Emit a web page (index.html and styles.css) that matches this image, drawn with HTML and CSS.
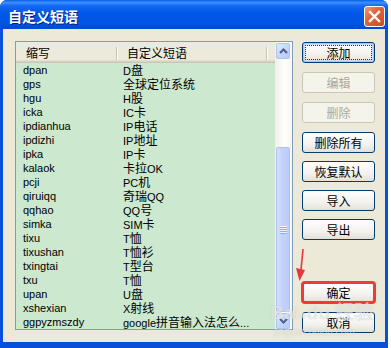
FILE: index.html
```html
<!DOCTYPE html>
<html lang="zh-CN">
<head>
    <meta charset="UTF-8">
    <meta name="viewport" content="width=device-width, initial-scale=1.0">
    <title>自定义短语</title>
    <link rel="stylesheet" href="styles.css">
</head>
<body>
    <div class="window">
        <div class="titlebar">
            <span class="title">自定义短语</span>
            <span class="close-btn">
                <svg width="13" height="13" viewBox="0 0 13 13">
                    <path d="M2 2 L11 11 M11 2 L2 11" stroke="#fff" stroke-width="2.4" stroke-linecap="square"/>
                </svg>
            </span>
        </div>
        <div class="client">
            <div class="list">
                <div class="list-body">
                    <div class="list-header">
                        <div class="col-1">缩写</div>
                        <span class="sep"></span>
                        <div class="col-2">自定义短语</div>
                        <span class="sep"></span>
                    </div>
                    <div class="row"><div class="col-1">dpan</div><div class="col-2">D<span class="cn">盘</span></div></div>
                    <div class="row"><div class="col-1">gps</div><div class="col-2"><span class="cn">全球定位系统</span></div></div>
                    <div class="row"><div class="col-1">hgu</div><div class="col-2">H<span class="cn">股</span></div></div>
                    <div class="row"><div class="col-1">icka</div><div class="col-2">IC<span class="cn">卡</span></div></div>
                    <div class="row"><div class="col-1">ipdianhua</div><div class="col-2">IP<span class="cn">电话</span></div></div>
                    <div class="row"><div class="col-1">ipdizhi</div><div class="col-2">IP<span class="cn">地址</span></div></div>
                    <div class="row"><div class="col-1">ipka</div><div class="col-2">IP<span class="cn">卡</span></div></div>
                    <div class="row"><div class="col-1">kalaok</div><div class="col-2"><span class="cn">卡拉</span>OK</div></div>
                    <div class="row"><div class="col-1">pcji</div><div class="col-2">PC<span class="cn">机</span></div></div>
                    <div class="row"><div class="col-1">qiruiqq</div><div class="col-2"><span class="cn">奇瑞</span>QQ</div></div>
                    <div class="row"><div class="col-1">qqhao</div><div class="col-2">QQ<span class="cn">号</span></div></div>
                    <div class="row"><div class="col-1">simka</div><div class="col-2">SIM<span class="cn">卡</span></div></div>
                    <div class="row"><div class="col-1">tixu</div><div class="col-2">T<span class="cn">恤</span></div></div>
                    <div class="row"><div class="col-1">tixushan</div><div class="col-2">T<span class="cn">恤衫</span></div></div>
                    <div class="row"><div class="col-1">txingtai</div><div class="col-2">T<span class="cn">型台</span></div></div>
                    <div class="row"><div class="col-1">txu</div><div class="col-2">T<span class="cn">恤</span></div></div>
                    <div class="row"><div class="col-1">upan</div><div class="col-2">U<span class="cn">盘</span></div></div>
                    <div class="row"><div class="col-1">xshexian</div><div class="col-2">X<span class="cn">射线</span></div></div>
                    <div class="row"><div class="col-1">ggpyzmszdy</div><div class="col-2">google<span class="cn">拼音输入法怎么</span>...</div></div>
                </div>
                <div class="scrollbar">
                    <div class="sb-btn">
                        <svg width="9" height="6" viewBox="0 0 9 6"><polyline points="1,5 4.5,1.5 8,5" fill="none" stroke="#4D6185" stroke-width="2"/></svg>
                    </div>
                    <div class="sb-thumb"><span class="grip"></span></div>
                    <div class="sb-btn">
                        <svg width="9" height="6" viewBox="0 0 9 6"><polyline points="1,1 4.5,4.5 8,1" fill="none" stroke="#4D6185" stroke-width="2"/></svg>
                    </div>
                </div>
            </div>
            <div class="buttons">
                <button class="btn default">添加</button>
                <button class="btn" disabled>编辑</button>
                <button class="btn" disabled>删除</button>
                <button class="btn">删除所有</button>
                <button class="btn">恢复默认</button>
                <button class="btn">导入</button>
                <button class="btn">导出</button>
                <button class="btn ok marked">确定</button>
                <button class="btn cancel">取消</button>
            </div>
        </div>

        <!-- 标注箭头 -->
        <svg class="arrow" width="16" height="36" viewBox="0 0 16 36">
            <path d="M10 1 L8 22" stroke="#E8363A" stroke-width="1.6" fill="none"/>
            <polygon points="3,20 12,22 6.5,33" fill="#E8363A"/>
        </svg>

        <div class="watermark">
            <span class="wm-big">Bai<span class="paw">●</span>du 经验</span>
            <span class="wm-small">jingyan.baidu.com</span>
        </div>
    </div>
</body>
</html>
```

FILE: styles.css
```css
body {
    margin: 0;
    padding: 0;
    background-color: #fff;
    overflow: hidden;
}
.window {
    position: relative;
    width: 388px;
    height: 348px;
    background: #0850DC;
    border-radius: 7px 7px 0 0;
    display: flex;
    flex-direction: column;
    font-family: "Liberation Sans", "Noto Sans CJK SC", sans-serif;
}
.titlebar {
    height: 29px;
    box-sizing: border-box;
    padding: 6px 3px 0 8px;
    display: flex;
    justify-content: space-between;
    align-items: flex-start;
    border-radius: 7px 7px 0 0;
    background: linear-gradient(to bottom, #0A5FE6 0%, #3C8FFF 9%, #1468F2 20%, #0058E8 45%, #0054E3 80%, #0049D2 100%);
}
.title {
    color: #fff;
    font-family: "Noto Sans CJK SC", sans-serif;
    font-size: 14px;
    font-weight: bold;
    line-height: 21px;
    text-shadow: 1px 1px #0A1F7E;
}
.close-btn {
    width: 21px;
    height: 21px;
    box-sizing: border-box;
    border: 1px solid #fff;
    border-radius: 3px;
    background: linear-gradient(135deg, #F0987B 0%, #E2643E 40%, #CE4A22 100%);
    display: flex;
    align-items: center;
    justify-content: center;
}
.client {
    margin: 0 3px;
    height: 313px;
    background: #ECE9D8;
    box-sizing: border-box;
    padding: 12px 10px 0 12px;
    display: flex;
}
.list {
    width: 278px;
    height: 289px;
    box-sizing: border-box;
    border: 1px solid #7F9DB9;
    background: #CCE8CF;
    display: flex;
    overflow: hidden;
}
.list-body {
    flex: 1;
    overflow: hidden;
}
.list-header {
    height: 21px;
    box-sizing: border-box;
    padding: 3px 0 2px;
    display: flex;
    align-items: center;
    background: #EBEADB;
    box-shadow: inset 0 -1px #CBC7B8, inset 0 -2px #D6D2C2, inset 0 -3px #E2DECD;
    font-family: "Noto Sans CJK SC", sans-serif;
    font-size: 12px;
    line-height: 16px;
}
.list-header .col-1 {
    width: 100px;
    box-sizing: border-box;
    padding-left: 10px;
}
.list-header .col-2 {
    width: 149px;
    box-sizing: border-box;
    padding-left: 10px;
}
.sep {
    width: 1px;
    height: 13px;
    background: #C7C5B2;
    box-shadow: 1px 0 #fff;
}
.row {
    display: flex;
    height: 14px;
    line-height: 14px;
    font-size: 11px;
    color: #000;
    white-space: nowrap;
}
.row .col-1 {
    width: 100px;
    box-sizing: border-box;
    padding-left: 7px;
}
.row .col-2 {
    padding-left: 7px;
}
.cn {
    font-family: "Noto Sans CJK SC", sans-serif;
    font-size: 12px;
}
.scrollbar {
    width: 17px;
    display: flex;
    flex-direction: column;
    background: linear-gradient(90deg, #F0EFE8, #FEFEFC 55%, #F7F6F0);
}
.sb-btn {
    height: 16px;
    margin: 1px 2px 0 1px;
    box-sizing: border-box;
    border: 1px solid #B1C4F1;
    border-radius: 2px;
    background: linear-gradient(135deg, #E3EBFE 0%, #C6D6FC 50%, #B6CAF7 100%);
    display: flex;
    align-items: center;
    justify-content: center;
}
.sb-thumb {
    flex: 1;
    margin: 88px 2px 0 1px;
    box-sizing: border-box;
    border: 1px solid #AEC2F1;
    border-radius: 2px;
    background: linear-gradient(90deg, #D5E1FE 0%, #C3D3FD 40%, #B9CCFA 100%);
    display: flex;
    align-items: center;
    justify-content: center;
}
.grip {
    width: 7px;
    height: 8px;
    background: repeating-linear-gradient(to bottom, #EEF4FE 0, #EEF4FE 1px, #8CB0F8 1px, #8CB0F8 2px);
}
.buttons {
    margin-left: 9px;
    padding-top: 1px;
    display: flex;
    flex-direction: column;
    gap: 8px;
}
.btn {
    width: 73px;
    height: 21px;
    padding: 0;
    box-sizing: border-box;
    border: 1px solid #003C74;
    border-radius: 3px;
    background: linear-gradient(to bottom, #FFFFFF 0%, #F3F2EE 60%, #E3E0D6 100%);
    font-family: "Noto Sans CJK SC", sans-serif;
    font-size: 12px;
    line-height: 18px;
    color: #000;
}
.btn.default {
    box-shadow: inset 0 0 0 1px #A9C6F5, inset 0 0 0 2px #CFDDF8;
    outline: 1px dotted #333;
    outline-offset: -4px;
}
.btn.default, .btn:disabled {
    margin-bottom: 1px;
}
.btn:disabled {
    border-color: #C9C7BA;
    background: #F5F4EA;
    color: #ACA899;
}
.btn.ok {
    margin-top: 34px;
}
.btn.cancel {
    margin-top: 1px;
}
.btn.marked {
    outline: 3px solid #F03A3A;
    outline-offset: -2px;
}
.arrow {
    position: absolute;
    left: 293px;
    top: 248px;
}
.watermark {
    position: absolute;
    left: 270px;
    top: 302px;
    display: flex;
    flex-direction: column;
    color: rgba(255, 255, 255, 0.55);
    text-shadow: 0 0 1px rgba(120, 120, 120, 0.35);
    pointer-events: none;
}
.wm-big {
    font-family: "Liberation Sans", "Noto Sans CJK SC", sans-serif;
    font-size: 19px;
    font-weight: bold;
    line-height: 22px;
}
.paw {
    font-size: 12px;
}
.wm-small {
    font-size: 10px;
    line-height: 12px;
    padding-left: 4px;
}
```
